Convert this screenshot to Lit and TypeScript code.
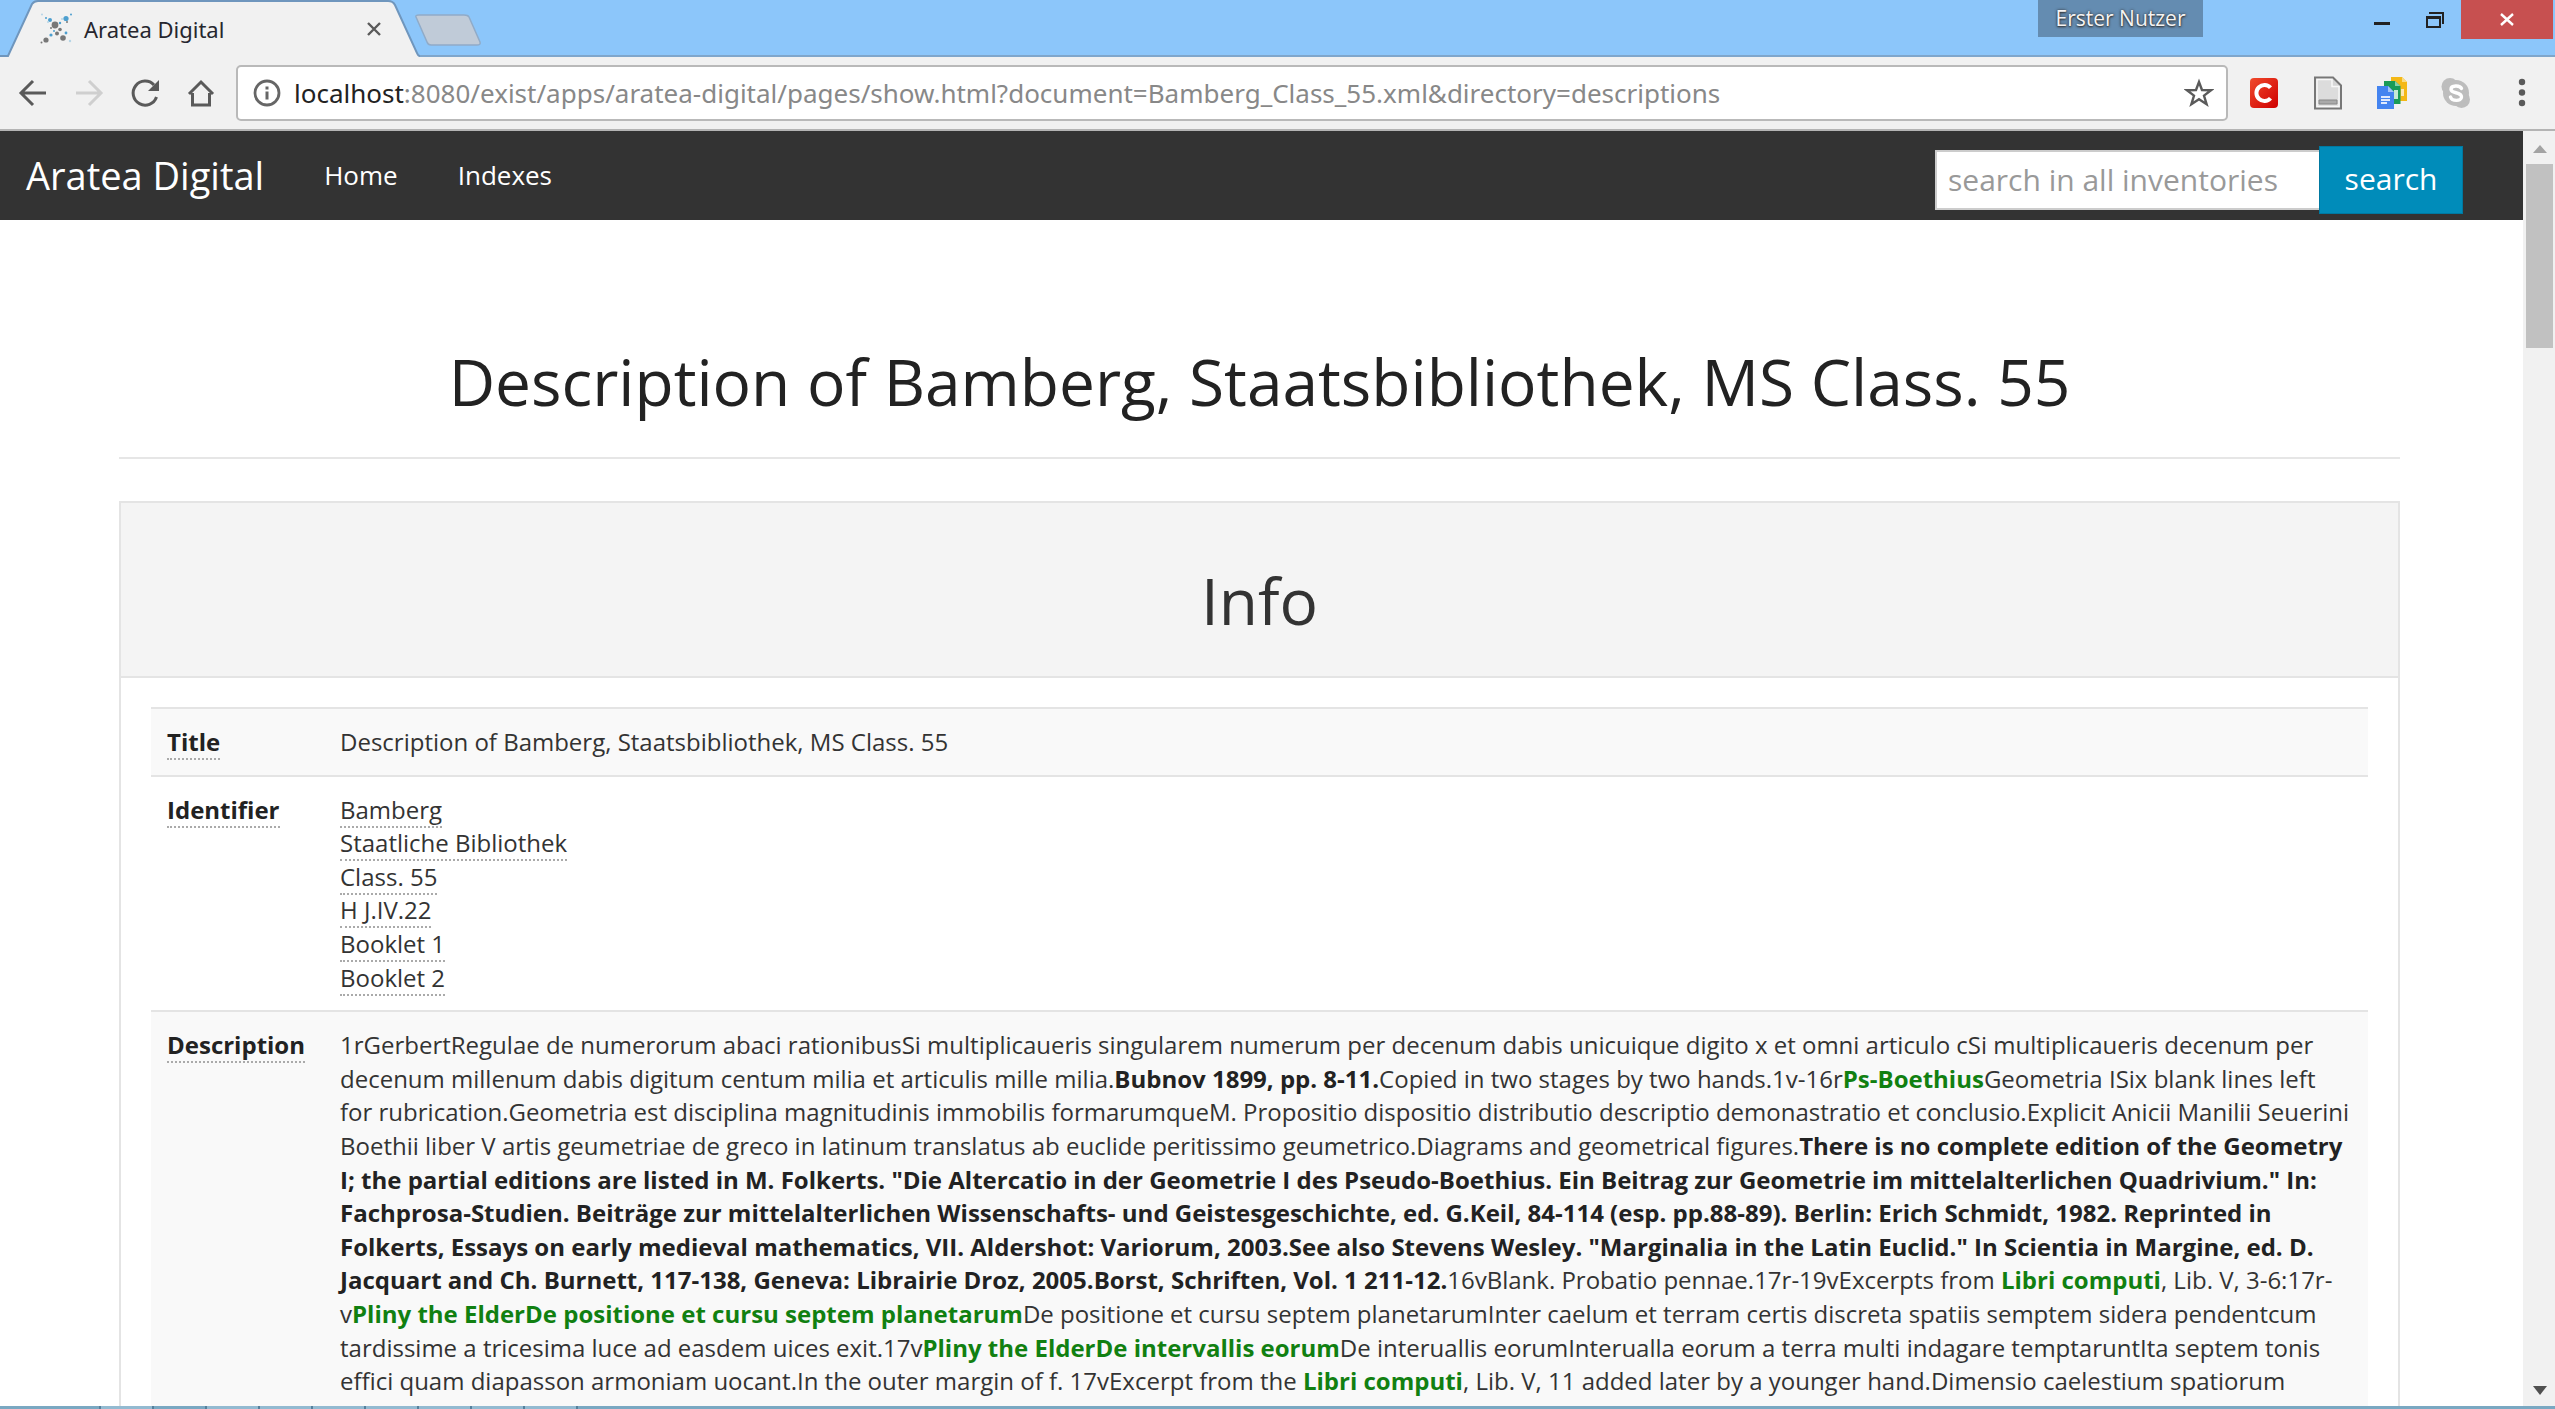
import { LitElement, html, css } from "lit";
import { customElement } from "lit/decorators.js";

type Run = { text: string; kind?: "strong" | "link" };

const description: Run[] = [
  { text: "1rGerbertRegulae de numerorum abaci rationibusSi multiplicaueris singularem numerum per decenum dabis unicuique digito x et omni articulo cSi multiplicaueris decenum per decenum millenum dabis digitum centum milia et articulis mille milia." },
  { text: "Bubnov 1899, pp. 8-11.", kind: "strong" },
  { text: "Copied in two stages by two hands.1v-16r" },
  { text: "Ps-Boethius", kind: "link" },
  { text: "Geometria ISix blank lines left for rubrication.Geometria est disciplina magnitudinis immobilis formarumqueM. Propositio dispositio distributio descriptio demonastratio et conclusio.Explicit Anicii Manilii Seuerini Boethii liber V artis geumetriae de greco in latinum translatus ab euclide peritissimo geumetrico.Diagrams and geometrical figures." },
  { text: "There is no complete edition of the Geometry I; the partial editions are listed in M. Folkerts. \"Die Altercatio in der Geometrie I des Pseudo-Boethius. Ein Beitrag zur Geometrie im mittelalterlichen Quadrivium.\" In: Fachprosa-Studien. Beiträge zur mittelalterlichen Wissenschafts- und Geistesgeschichte, ed. G.Keil, 84-114 (esp. pp.88-89). Berlin: Erich Schmidt, 1982. Reprinted in Folkerts, Essays on early medieval mathematics, VII. Aldershot: Variorum, 2003.See also Stevens Wesley. \"Marginalia in the Latin Euclid.\" In Scientia in Margine, ed. D. Jacquart and Ch. Burnett, 117-138, Geneva: Librairie Droz, 2005.Borst, Schriften, Vol. 1 211-12.", kind: "strong" },
  { text: "16vBlank. Probatio pennae.17r-19vExcerpts from " },
  { text: "Libri computi", kind: "link" },
  { text: ", Lib. V, 3-6:17r-v" },
  { text: "Pliny the ElderDe positione et cursu septem planetarum", kind: "link" },
  { text: "De positione et cursu septem planetarumInter caelum et terram certis discreta spatiis semptem sidera pendentcum tardissime a tricesima luce ad easdem uices exit.17v" },
  { text: "Pliny the ElderDe intervallis eorum", kind: "link" },
  { text: "De interuallis eorumInterualla eorum a terra multi indagare temptaruntIta septem tonis effici quam diapasson armoniam uocant.In the outer margin of f. 17vExcerpt from the " },
  { text: "Libri computi", kind: "link" },
  { text: ", Lib. V, 11 added later by a younger hand.Dimensio caelestium spatiorum secundum quosdam. A terra ad lunam sunt .cxxvi. stadiorum esse. A luna milia." },
  { text: "Borst, Schriften, Vol. 2 pp. 1082.17v-18r", kind: "strong" },
  { text: "Pliny the ElderDe absidibus", kind: "link" },
  { text: " earum Tres autem sunt circuli" },
];

const identifiers = ["Bamberg", "Staatliche Bibliothek", "Class. 55", "H J.IV.22", "Booklet 1", "Booklet 2"];

const stroke = (d: string, cls: string) => html`
  <svg class="ico ${cls}" viewBox="0 0 32 32" aria-hidden="true"><path d=${d}></path></svg>`;

@customElement("browser-tabs")
export class BrowserTabs extends LitElement {
  static styles = css`
    :host { display: block; }
    .strip {
      display: flex;
      align-items: flex-start;
      height: 57px;
      background: #8cc6fa;
      box-shadow: inset 0 -2px 0 #7fa6cb;
      font-family: "Open Sans", sans-serif;
    }
    .tab {
      position: relative;
      display: flex;
      align-items: center;
      width: 420px;
      height: 57px;
      box-sizing: border-box;
      padding: 0 36px 0 40px;
      gap: 12px;
    }
    .shape { position: absolute; inset: 0; width: 100%; height: 100%; }
    .favicon { position: relative; width: 32px; height: 32px; }
    .title {
      position: relative;
      flex: 1;
      font-family: "Noto Sans", sans-serif;
      font-size: 22px;
      color: #26262e;
      white-space: nowrap;
    }
    button { border: 0; padding: 0; margin: 0; background: none; display: flex; align-items: center; justify-content: center; }
    .close { position: relative; width: 20px; height: 20px; }
    .new { width: 68px; height: 34px; margin: 13px 0 0 -6px; }
    .new svg { width: 68px; height: 34px; }
    .spacer { flex: 1; }
    .user {
      width: 165px;
      height: 37px;
      padding-bottom: 2px;
      margin-right: 152px;
      background: #648cb1;
      color: #f4f4f4;
      font-family: "Open Sans", sans-serif;
      font-size: 21px;
      text-shadow: 0 0 3px #333, 0 1px 2px #333;
    }
    .win { width: 53px; height: 39px; }
    .win.min { padding-top: 6px; }
    .shut { width: 92px; height: 39px; background: #c75050; margin-right: 2px; }
  `;
  render() {
    return html`
      <div class="strip">
        <div class="tab">
          <svg class="shape" viewBox="0 0 420 57" preserveAspectRatio="none" aria-hidden="true">
            <path d="M0 57 L8 56 L32 4 Q34 1 38 1 L388 1 Q393 1 395 5 L417 53 Q418 56 420 57Z" fill="#f1f1f1"></path>
            <path d="M0 56 H8 L32 4 Q34 1 38 1 L388 1 Q393 1 395 5 L417 53 Q418 56 420 56" fill="none" stroke="#6f96bd" stroke-width="2"></path>
          </svg>
          <svg class="favicon" viewBox="0 0 32 32" aria-hidden="true">
            <g fill="#777"><circle cx="15" cy="12" r="3.4"></circle><circle cx="20" cy="16.500" r="1.8"></circle><circle cx="17" cy="20.500" r="2"></circle><circle cx="23" cy="25" r="2.800"></circle><circle cx="6" cy="27" r="2.600"></circle><circle cx="11" cy="15" r="1"></circle><circle cx="1.500" cy="29.500" r="1"></circle><circle cx="27" cy="9" r="1"></circle></g>
            <g fill="#4d9fcf"><circle cx="10" cy="7" r="2"></circle><circle cx="26" cy="5.500" r="2.600"></circle><circle cx="20" cy="10" r="1.200"></circle><circle cx="6" cy="5" r="1"></circle><circle cx="11" cy="22" r="1.600"></circle><circle cx="26" cy="20" r="1.400"></circle><circle cx="31" cy="1.500" r="1"></circle><circle cx="14" cy="18" r="1"></circle></g>
            <g fill="#b5d4e6"><circle cx="2" cy="1.500" r="1"></circle><circle cx="30" cy="28" r="1.200"></circle><circle cx="22" cy="6" r="1"></circle><circle cx="8" cy="9" r="1"></circle></g>
          </svg>
          <span class="title">Aratea Digital</span>
          <button class="close" aria-label="Close tab">
            <svg width="16" height="16" viewBox="0 0 16 16"><path d="M2 2 L14 14 M14 2 L2 14" stroke="#5a5a5a" stroke-width="2.400" fill="none"></path></svg>
          </button>
        </div>
        <button class="new" aria-label="New tab">
          <svg viewBox="0 0 68 34"><path d="M2 4 Q1 2 5 2 H50 Q54 2 55 4 L66 29 Q67 32 63 32 H17 Q14 32 13 29Z" fill="#c0cbd8" stroke="#90abc8" stroke-width="1.500"></path></svg>
        </button>
        <span class="spacer"></span>
        <button class="user">Erster Nutzer</button>
        <button class="win min" aria-label="Minimize"><svg width="16" height="16" viewBox="0 0 16 16"><path d="M0 7h16v3H0z" fill="#222"></path></svg></button>
        <button class="win" aria-label="Restore"><svg width="18" height="16" viewBox="0 0 18 16"><path d="M3 1 H17 V12" fill="none" stroke="#222" stroke-width="2"></path><path d="M1 5 H14 V15 H1Z" fill="none" stroke="#222" stroke-width="2"></path><path d="M1 4h13v3H1z" fill="#222"></path></svg></button>
        <button class="shut" aria-label="Close"><svg width="14" height="13" viewBox="0 0 14 13"><path d="M1 1 L13 12 M13 1 L1 12" stroke="#fff" stroke-width="2.400" fill="none"></path></svg></button>
      </div>`;
  }
}

@customElement("browser-toolbar")
export class BrowserToolbar extends LitElement {
  static styles = css`
    :host { display: block; }
    .bar {
      display: flex;
      align-items: center;
      height: 74px;
      padding: 0 21px 0 5px;
      box-sizing: border-box;
      background: #f1f1f1;
      border-bottom: 2px solid #b4b4b4;
    }
    button { border: 0; padding: 0; margin: 0; background: none; display: flex; align-items: center; justify-content: center; }
    .nav { width: 56px; height: 40px; }
    .ico { width: 32px; height: 32px; fill: none; stroke: #5a5a5a; stroke-width: 3; }
    .dim { stroke: #cfcfcf; }
    .omni {
      flex: 1;
      display: flex;
      align-items: center;
      height: 56px;
      box-sizing: border-box;
      margin: 0 4px 0 7px;
      padding: 0 12px 0 14px;
      gap: 12px;
      border: 2px solid #b9b9b9;
      border-radius: 5px;
      background: #fff;
    }
    .omni .info { width: 30px; }
    .url {
      flex: 1;
      font-family: "Noto Sans", sans-serif;
      font-size: 26px;
      line-height: 40px;
      color: #888;
      white-space: nowrap;
    }
    .host { color: #222; }
    .ext { width: 64px; height: 40px; }
    .menu { width: 24px; height: 40px; margin-left: 22px; }
  `;
  render() {
    return html`
      <div class="bar">
        <button class="nav" aria-label="Back">${stroke("M29 16 H5 M16 4 L4 16 L16 28", "")}</button>
        <button class="nav" aria-label="Forward">${stroke("M3 16 H27 M16 4 L28 16 L16 28", "dim")}</button>
        <button class="nav" aria-label="Reload">
          <svg class="ico" viewBox="0 0 32 32"><path d="M25 8 A12 12 0 1 0 27.500 20"></path><path d="M30 3 V14 H19Z" fill="#5a5a5a" stroke="none"></path></svg>
        </button>
        <button class="nav" aria-label="Home">${stroke("M4 17 L16 5 L28 17 M7.500 16 V28 H24.500 V16", "")}</button>
        <div class="omni">
          <svg class="info" width="30" height="30" viewBox="0 0 30 30" aria-hidden="true"><circle cx="15" cy="15" r="12" fill="none" stroke="#666" stroke-width="2.800"></circle><path d="M13.500 13.500h3v8h-3zM13.500 8.500h3v3h-3z" fill="#666"></path></svg>
          <span class="url"><span class="host">localhost</span>:8080/exist/apps/aratea-digital/pages/show.html?document=Bamberg_Class_55.xml&amp;directory=descriptions</span>
          <button aria-label="Bookmark"><svg width="30" height="30" viewBox="0 0 30 30"><path d="M15 4 L18 12 L27 12.200 L20 17.600 L22.600 26.200 L15 21.200 L7.400 26.200 L10 17.600 L3 12.200 L12 12Z" fill="none" stroke="#5a5a5a" stroke-width="2.400"></path></svg></button>
        </div>
        <button class="ext" aria-label="Citavi">
          <svg width="30" height="32" viewBox="0 0 30 32"><defs><linearGradient id="r" x1="0" y1="0" x2="1" y2="1"><stop offset="0" stop-color="#f04a2c"></stop><stop offset="1" stop-color="#cf0000"></stop></linearGradient></defs><rect x="1" y="1" width="28" height="30" rx="4" fill="url(#r)"></rect><path d="M21.500 10.800 A8 8 0 1 0 21.500 21.200" fill="none" stroke="#fff" stroke-width="4"></path></svg>
        </button>
        <button class="ext" aria-label="Document">
          <svg width="30" height="34" viewBox="0 0 30 34"><path d="M2 1.500 H20 L28 9.500 V32.500 H2Z" fill="#d6d6d6" stroke="#777" stroke-width="2"></path><path d="M4 3.500 H19 V10.500 H26 V30.500 H4Z" fill="#dcdcdc" stroke="#f8f8f8" stroke-width="1.500"></path><path d="M6 24h18v4H6z" fill="#aaa" stroke="#888"></path></svg>
        </button>
        <button class="ext" aria-label="Office editing">
          <svg width="32" height="34" viewBox="0 0 32 34"><path d="M15 1 H26 L31 6 V25 H15Z" fill="#f4b816"></path><path d="M26 1 L31 6 H26Z" fill="#f9dc85"></path><path d="M25 13h3v7h-3z" fill="#fbe8b5"></path><path d="M8 5 H19 L24.500 10 V28 H8Z" fill="#1a9b57"></path><path d="M19 5 L24.500 10 H19Z" fill="#86d0aa"></path><path d="M18 14h4v9h-4z" fill="#c6e9d5"></path><path d="M1 10 H12 L18 16 V33 H1Z" fill="#4484f0"></path><path d="M12 10 L18 16 H12Z" fill="#a4c3f8"></path><path d="M5 20h9v2H5zM5 23h9v2H5zM5 26h6v2H5z" fill="#dfe9fd"></path></svg>
        </button>
        <button class="ext" aria-label="Skype">
          <svg width="32" height="32" viewBox="0 0 32 32"><circle cx="10" cy="9.500" r="8.500" fill="#bdbdbd"></circle><circle cx="21.500" cy="22.500" r="8.500" fill="#bdbdbd"></circle><circle cx="16" cy="16" r="13" fill="#bdbdbd"></circle><path d="M21.500 11.500 C20 8 11 8 11 12.200 C11 17 21.500 14.500 21.500 20 C21.500 24.500 12 24.500 10.500 20" fill="none" stroke="#fff" stroke-width="3.400" stroke-linecap="round"></path></svg>
        </button>
        <button class="menu" aria-label="Menu"><svg width="8" height="30" viewBox="0 0 8 30"><g fill="#5a5a5a"><circle cx="4" cy="4" r="3.200"></circle><circle cx="4" cy="14.500" r="3.200"></circle><circle cx="4" cy="25" r="3.200"></circle></g></svg></button>
      </div>`;
  }
}

@customElement("site-header")
export class SiteHeader extends LitElement {
  static styles = css`
    :host { display: block; }
    .bar {
      display: flex;
      align-items: center;
      height: 89px;
      padding: 0 60px 0 26px;
      background: #333;
      font-family: "Open Sans", sans-serif;
    }
    a { color: #fff; text-decoration: none; }
    .brand { font-size: 38px; }
    nav { display: flex; gap: 60px; margin-left: 60px; flex: 1; }
    nav a { font-size: 26px; }
    .brand, nav { padding-bottom: 2px; }
    form { display: flex; align-items: center; padding-top: 8px; }
    input {
      width: 384px;
      height: 60px;
      box-sizing: border-box;
      border: 2px solid #ccc;
      border-right: 0;
      padding: 0 11px;
      background: #fff;
      font: 30px "Open Sans", sans-serif;
    }
    input::placeholder { color: #999; opacity: 1; }
    button {
      height: 68px;
      width: 144px;
      border: 1px solid #0079a1;
      background: #008cba;
      color: #fff;
      font: 30px "Open Sans", sans-serif;
      padding: 0 0 2px;
    }
  `;
  render() {
    return html`
      <header class="bar">
        <a class="brand" href="#">Aratea Digital</a>
        <nav><a href="#home">Home</a><a href="#indexes">Indexes</a></nav>
        <form role="search">
          <input type="text" placeholder="search in all inventories" aria-label="search in all inventories" />
          <button type="button">search</button>
        </form>
      </header>`;
  }
}

@customElement("app-root")
export class AppRoot extends LitElement {
  static styles = css`
    :host {
      display: flex;
      flex-direction: column;
      height: 100vh;
      overflow: hidden;
      background: #fff;
    }
    .view { flex: 1; min-height: 0; display: flex; }
    .page { flex: 1; min-width: 0; overflow: hidden; }
    main { padding: 0 123px 0 119px; font-family: "Open Sans", sans-serif; color: #333; }
    h1, h2 { margin: 0; font-weight: 400; font-size: 64px; line-height: 72px; text-align: center; color: #222; }
    h1 { padding: 126px 0 39px; border-bottom: 2px solid #e6e6e6; }
    .panel { margin-top: 42px; border: 2px solid #e4e4e4; }
    .head { padding: 62px 0 39px; background: #f4f4f4; border-bottom: 2px solid #e4e4e4; }
    h2 { color: #333; }
    .body { padding: 29px 30px; }
    table { width: 100%; border-collapse: collapse; font-size: 24px; line-height: 1.4; }
    th, td { border-top: 2px solid #e4e4e4; padding: 16px; text-align: left; vertical-align: top; }
    tr:nth-child(odd) { background: #f9f9f9; }
    th { font-weight: 700; width: 141px; color: #222; }
    .term { border-bottom: 2px dotted #aaa; line-height: 1; }
    .ids { list-style: none; margin: 0; padding: 0; }
    b { color: #222; }
    a { color: #118011; font-weight: 700; text-decoration: none; }
    .scroll { width: 32px; box-sizing: border-box; padding: 2px 2px 0 3px; background: #f1f1f1; display: flex; flex-direction: column; align-items: center; }
    .scroll svg { width: 14px; height: 31px; }
    .thumb { width: 100%; height: 184px; background: #c1c1c1; }
    .rest { flex: 1; }
    .task { display: flex; gap: 2px; height: 3px; background: #55809c; }
    .task i { background: #7aa8c2; width: 51px; }
    .task .lite { background: #93bad1; }
    .task .lead { width: 99px; }
    .task .wide { flex: 1; }
  `;

  private run(r: Run) {
    if (r.kind === "strong") return html`<b>${r.text}</b>`;
    if (r.kind === "link") return html`<a href="#ref">${r.text}</a>`;
    return r.text;
  }

  render() {
    return html`
      <browser-tabs></browser-tabs>
      <browser-toolbar></browser-toolbar>
      <div class="view">
        <div class="page">
          <site-header></site-header>
          <main>
            <h1>Description of Bamberg, Staatsbibliothek, MS Class. 55</h1>
            <section class="panel">
              <div class="head"><h2>Info</h2></div>
              <div class="body">
                <table>
                  <tbody>
                    <tr><th scope="row"><span class="term">Title</span></th><td>Description of Bamberg, Staatsbibliothek, MS Class. 55</td></tr>
                    <tr><th scope="row"><span class="term">Identifier</span></th><td><ul class="ids">${identifiers.map((t) => html`<li><span class="term">${t}</span></li>`)}</ul></td></tr>
                    <tr><th scope="row"><span class="term">Description</span></th><td>${description.map((r) => this.run(r))}</td></tr>
                  </tbody>
                </table>
              </div>
            </section>
          </main>
        </div>
        <div class="scroll" aria-hidden="true">
          <svg viewBox="0 0 14 31"><path d="M0 20 L7 12 L14 20Z" fill="#a3a3a3"></path></svg>
          <div class="thumb"></div>
          <div class="rest"></div>
          <svg viewBox="0 0 14 31"><path d="M0 11 H14 L7 20Z" fill="#505050"></path></svg>
        </div>
      </div>
      <div class="task" aria-hidden="true">
        <i class="lead"></i><i class="lite"></i><i></i><i class="lite"></i><i class="lite"></i><i class="lite"></i><i class="lite"></i><i class="lite"></i><i class="lite"></i><i class="lite"></i><i class="wide"></i>
      </div>`;
  }
}
